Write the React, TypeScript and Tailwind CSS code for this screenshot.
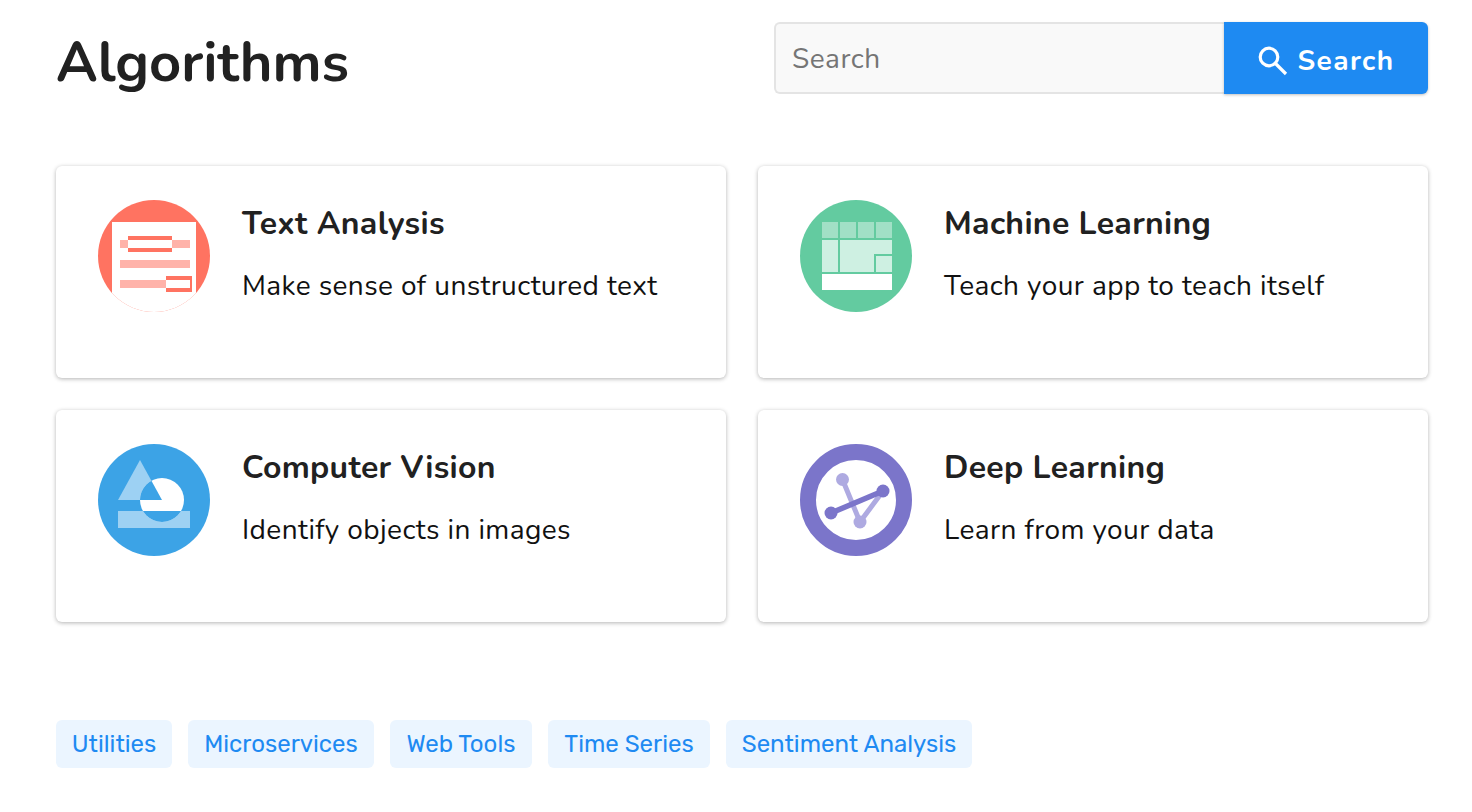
const font = "font-['Nunito','Lato','Noto_Sans',sans-serif]";

function TextIcon() {
  return (
    <svg width="112" height="112" viewBox="0 0 112 112" className="shrink-0">
      <defs><clipPath id="c1"><circle cx="56" cy="56" r="56" /></clipPath></defs>
      <circle cx="56" cy="56" r="56" fill="#ff7361" />
      <g clipPath="url(#c1)">
        <rect x="14" y="22" width="84" height="90" fill="#fff" />
        <rect x="22" y="40" width="70" height="8" fill="#ffb3aa" />
        <rect x="22" y="60" width="70" height="8" fill="#ffb3aa" />
        <rect x="22" y="80" width="46" height="8" fill="#ffb3aa" />
        <rect x="30" y="36" width="44" height="16" fill="#ff7361" />
        <rect x="30" y="40" width="44" height="8" fill="#fff" />
        <rect x="68" y="76" width="26" height="16" fill="#ff7361" />
        <rect x="68" y="80" width="24" height="8" fill="#fff" />
      </g>
    </svg>
  );
}

function MlIcon() {
  return (
    <svg width="112" height="112" viewBox="0 0 112 112" className="shrink-0">
      <circle cx="56" cy="56" r="56" fill="#63cba0" />
      <rect x="22" y="22" width="16" height="16" fill="#a1e0c6" />
      <rect x="40" y="22" width="16" height="16" fill="#a1e0c6" />
      <rect x="58" y="22" width="16" height="16" fill="#a1e0c6" />
      <rect x="76" y="22" width="16" height="16" fill="#a1e0c6" />
      <rect x="22" y="40" width="16" height="32" fill="#cef0e2" />
      <path d="M40 40H92V54H74V72H40Z" fill="#cef0e2" />
      <rect x="76" y="56" width="16" height="16" fill="#cef0e2" />
      <rect x="22" y="74" width="70" height="16" fill="#fff" />
    </svg>
  );
}

function VisionIcon() {
  return (
    <svg width="112" height="112" viewBox="0 0 112 112" className="shrink-0">
      <defs><clipPath id="c3"><circle cx="64" cy="56" r="22" /></clipPath></defs>
      <circle cx="56" cy="56" r="56" fill="#3ca3e6" />
      <path d="M42 16L64 56H20Z" fill="#9dd1f3" />
      <rect x="20" y="67" width="72" height="17" fill="#9dd1f3" />
      <circle cx="64" cy="56" r="22" fill="#fff" />
      <g clipPath="url(#c3)" fill="#3ca3e6">
        <path d="M42 16L64 56H20Z" />
        <rect x="20" y="67" width="72" height="17" />
      </g>
    </svg>
  );
}

function DeepIcon() {
  return (
    <svg width="112" height="112" viewBox="0 0 112 112" className="shrink-0">
      <circle cx="56" cy="56" r="48" fill="#fff" stroke="#7b75ca" strokeWidth="16" />
      <path d="M42.5 35.5L60 78L83 47" fill="none" stroke="#aeaae1" strokeWidth="5" />
      <circle cx="42.5" cy="35.5" r="6.5" fill="#aeaae1" />
      <circle cx="60" cy="78" r="6.5" fill="#aeaae1" />
      <path d="M31 69L83 47" stroke="#7b75ca" strokeWidth="5.5" />
      <circle cx="83" cy="47" r="6.5" fill="#7b75ca" />
      <circle cx="31" cy="69" r="6.5" fill="#7b75ca" />
    </svg>
  );
}

function SearchIcon() {
  return (
    <svg width="30" height="30" viewBox="0 0 30 30" fill="none" stroke="#fff" strokeWidth="3.2" className="shrink-0">
      <circle cx="11" cy="11" r="8.8" />
      <path d="M17.5 17.5L28 28" />
    </svg>
  );
}

function Card({ icon, title, text }: { icon: React.ReactNode; title: string; text: string }) {
  return (
    <div className="flex h-[212px] gap-8 rounded-md bg-white pl-[42px] pr-6 pt-[34px] shadow-[0_1px_4px_rgba(0,0,0,0.3)]">
      {icon}
      <div className="min-w-0">
        <h2 className="mt-[4px] text-[32px] font-bold leading-[40px] tracking-[0.32px] text-[#212121]">{title}</h2>
        <p className="mt-[22px] whitespace-nowrap text-[28px] leading-[40px] tracking-[0.42px] text-[#111]">{text}</p>
      </div>
    </div>
  );
}

const tags = [
  { label: "Utilities", width: "w-[116px]" },
  { label: "Microservices", width: "w-[186px]" },
  { label: "Web Tools", width: "w-[142px]" },
  { label: "Time Series", width: "w-[162px]" },
  { label: "Sentiment Analysis", width: "w-[246px]" },
];

export default function App() {
  return (
    <div className={`${font} h-[812px] w-[1472px] overflow-hidden bg-white pl-14 pr-[44px] pt-[22px]`}>
      <header className="flex items-start justify-between">
        <h1 className="pt-[10px] text-[56px] font-bold leading-[62px] text-[#212121]">Algorithms</h1>
        <div className="flex h-[72px] w-[654px]">
          <div className="flex flex-1 items-center rounded-l-md border-2 border-r-0 border-[#e4e4e4] bg-[#f9f9f9] pl-4 pt-[2px] text-[28px] tracking-[0.5px] text-[#757575]">Search</div>
          <button className="flex w-[204px] items-center justify-center gap-[10px] rounded-r-md bg-[#1e8af2] pt-[6px] text-[28px] font-bold tracking-[1.4px] text-white shadow-[0_1px_3px_rgba(0,0,0,0.25)]">
            <SearchIcon />
            Search
          </button>
        </div>
      </header>
      <main className="mt-[72px] grid grid-cols-2 gap-8">
        <Card icon={<TextIcon />} title="Text Analysis" text="Make sense of unstructured text" />
        <Card icon={<MlIcon />} title="Machine Learning" text="Teach your app to teach itself" />
        <Card icon={<VisionIcon />} title="Computer Vision" text="Identify objects in images" />
        <Card icon={<DeepIcon />} title="Deep Learning" text="Learn from your data" />
      </main>
      <div className="mt-[98px] flex gap-4">
        {tags.map((t) => (
          <span key={t.label} className={`flex h-12 items-center justify-center rounded-md bg-[#ebf5ff] font-['Rubik','Roboto',sans-serif] text-[24px] text-[#1e8af2] ${t.width}`}>{t.label}</span>
        ))}
      </div>
    </div>
  );
}
